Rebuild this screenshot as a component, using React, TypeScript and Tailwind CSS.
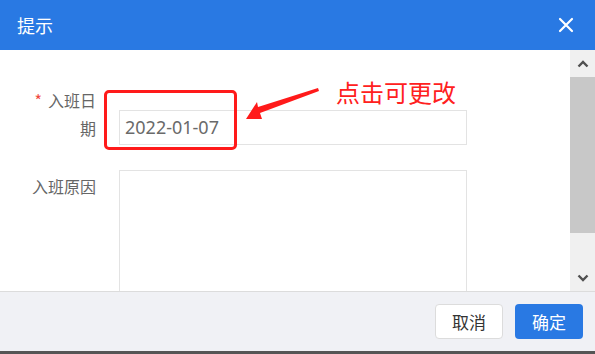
import React from "react";

const font = { fontFamily: '"Noto Sans CJK SC", "Noto Sans", sans-serif' };

export default function App() {
  return (
    <div className="w-[595px] h-[354px] flex flex-col bg-white overflow-hidden relative" style={font}>
      {/* Header */}
      <div className="h-[50px] shrink-0 bg-[#2979e3] flex items-center justify-between pl-[17px] pr-[21px]">
        <span className="text-white text-[18px] leading-none">提示</span>
        <svg width="16" height="16" viewBox="0 0 16 16">
          <path d="M2 2 L14 14 M14 2 L2 14" stroke="#ffffff" strokeWidth="2.2" strokeLinecap="round" />
        </svg>
      </div>

      {/* Body */}
      <div className="h-[241px] shrink-0 flex">
        <div className="flex-1 relative overflow-hidden">
          <div className="flex flex-col pt-[60px] gap-[25px]">
            <div className="flex gap-[23px]">
              <div className="w-[96px] text-right text-[16px] leading-[28px] text-[#666] -mt-[24px]">
                <span className="text-[#f0483e] mr-[6px]">*</span>入班日<br />期
              </div>
              <div
                className="w-[348px] h-[35px] border border-[#e3e3e3] flex items-center px-[5px] text-[18px] text-[#6a6a6a]"
                style={{ fontFamily: '"Noto Sans", "Open Sans", sans-serif' }}
              >
                2022-01-07
              </div>
            </div>
            <div className="flex gap-[23px]">
              <div className="w-[96px] text-right text-[16px] leading-[32px] text-[#666]">入班原因</div>
              <div className="w-[348px] h-[140px] border border-[#e3e3e3]"></div>
            </div>
          </div>

          {/* Annotation overlay */}
          <div className="absolute left-[104px] top-[40px] w-[133px] h-[60px] border-[3px] border-[#ff1a1a] rounded-[5px]"></div>
          <svg className="absolute left-0 top-0" width="570" height="241" viewBox="0 50 570 241">
            <polygon points="318,88 319,91 260,113 262,119 246,119 257,102 258,107" fill="#ff1a1a" />
          </svg>
          <div className="absolute left-[336px] top-[27px] text-[24px] leading-[30px] text-[#ff2020]">点击可更改</div>
        </div>

        {/* Scrollbar */}
        <div className="w-[25px] shrink-0 bg-[#f0f0f0] flex flex-col">
          <div className="h-[27px] flex items-center justify-center">
            <svg width="12" height="8" viewBox="0 0 12 8">
              <path d="M1.5 6.5 L6 2 L10.5 6.5" stroke="#505050" strokeWidth="2.4" fill="none" />
            </svg>
          </div>
          <div className="h-[156px] bg-[#c8c8c8]"></div>
          <div className="flex-1"></div>
          <div className="h-[27px] flex items-center justify-center">
            <svg width="12" height="8" viewBox="0 0 12 8">
              <path d="M1.5 1.5 L6 6 L10.5 1.5" stroke="#505050" strokeWidth="2.4" fill="none" />
            </svg>
          </div>
        </div>
      </div>

      {/* Footer */}
      <div className="h-[60px] shrink-0 bg-[#f0f1f5] border-t border-[#dcdcdc] flex items-center justify-end pr-[12px] gap-[12px]">
        <button className="w-[68px] h-[35px] rounded-[4px] bg-white border border-[#dcdcdc] text-[17px] text-[#333]">取消</button>
        <button className="w-[68px] h-[35px] rounded-[4px] bg-[#2979e3] text-[17px] text-white">确定</button>
      </div>
      <div className="h-[3px] shrink-0 bg-[#555]"></div>
    </div>
  );
}
